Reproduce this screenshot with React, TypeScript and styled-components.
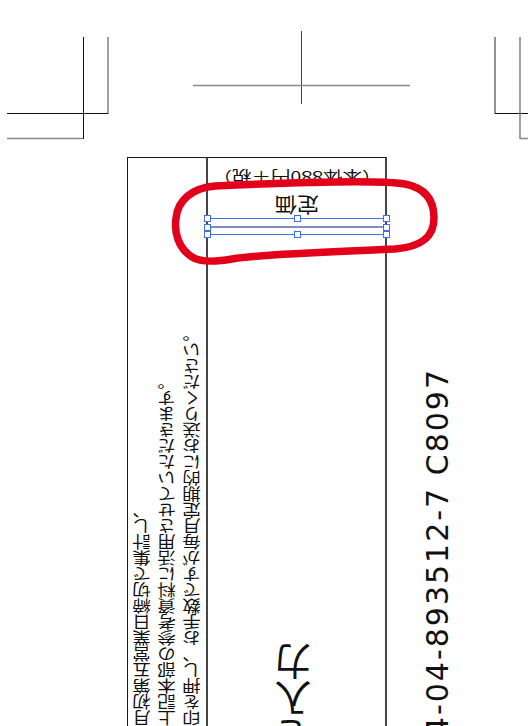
import React from "react";
import styled, { createGlobalStyle } from "styled-components";

const GlobalStyle = createGlobalStyle`
  html, body { margin: 0; padding: 0; background: #ffffff; }
  body { font-family: "Noto Sans CJK JP", "Noto Sans", sans-serif; color: #111; }
`;

const Page = styled.div`
  position: relative;
  width: 528px;
  height: 726px;
  overflow: hidden;
  background: #ffffff;
`;

const Marks = styled.svg`
  display: block;
  width: 528px;
  height: 157px;
`;

const Sheet = styled.div`
  display: flex;
  align-items: stretch;
  height: 569px;
  padding-left: 127px;
`;

const Flap = styled.div`
  box-sizing: border-box;
  width: 79px;
  flex-shrink: 0;
  border-left: 1px solid #1a1a1a;
  border-top: 1px solid #1a1a1a;
  padding-left: 7px;
  display: flex;
  flex-direction: column;
  align-items: flex-start;
`;

const Notice = styled.div`
  flex-shrink: 0;
  margin-top: 168px;
  writing-mode: vertical-rl;
  transform: rotate(180deg) scaleX(1.15);
  font-size: 16px;
  line-height: 21.7px;
  white-space: pre;
  color: #111;
`;

const Spine = styled.div`
  box-sizing: border-box;
  width: 181px;
  flex-shrink: 0;
  border-top: 1px solid #1a1a1a;
  border-left: 2px solid #454545;
  border-right: 2px solid #454545;
  display: flex;
  flex-direction: column;
  align-items: center;
`;

const Flipped = styled.div<{ $size: number; $top: number; $stretch: number }>`
  flex-shrink: 0;
  margin-top: ${(p) => p.$top}px;
  font-size: ${(p) => p.$size}px;
  line-height: ${(p) => p.$size}px;
  white-space: nowrap;
  transform: rotate(180deg) scaleX(${(p) => p.$stretch});
  color: #111;
`;

const Frame = styled.div`
  position: relative;
  box-sizing: border-box;
  align-self: stretch;
  flex-shrink: 0;
  margin: 3px -2px 0 -1px;
  height: 17px;
  border-top: 1px solid #3f6ff0;
  border-bottom: 1px solid #3f6ff0;
  display: flex;
  align-items: center;
`;

const MidRule = styled.div`
  flex: 1;
  height: 2px;
  background: #7f8fb6;
`;

const Handle = styled.span<{ $x: "l" | "c" | "r"; $y: "t" | "m" | "b" }>`
  position: absolute;
  box-sizing: border-box;
  width: 7px;
  height: 7px;
  background: #ffffff;
  border: 1px solid #3f6ff0;
  left: ${(p) => (p.$x === "l" ? "-3px" : p.$x === "c" ? "calc(50% - 3px)" : "calc(100% - 4px)")};
  top: ${(p) => (p.$y === "t" ? "-4px" : p.$y === "m" ? "calc(50% - 3px)" : "calc(100% - 3px)")};
`;

const Title = styled.div`
  flex-shrink: 0;
  margin: 408px 7px 0 0;
  writing-mode: vertical-rl;
  transform: rotate(180deg);
  font-size: 37px;
  line-height: 37px;
  white-space: nowrap;
  color: #111;
`;

const CodeColumn = styled.div`
  flex: 1;
  display: flex;
  flex-direction: column;
  align-items: flex-start;
  padding-left: 36px;
`;

const Isbn = styled.div`
  flex-shrink: 0;
  margin-top: 211px;
  writing-mode: vertical-rl;
  transform: rotate(180deg);
  font-family: "DejaVu Sans", sans-serif;
  font-size: 30px;
  line-height: 30px;
  letter-spacing: 2px;
  white-space: nowrap;
  color: #111;
`;

const Annotation = styled.svg`
  position: absolute;
  left: 0;
  top: 0;
  width: 528px;
  height: 726px;
  pointer-events: none;
`;

const CropMarks = () => (
  <Marks viewBox="0 0 528 157">
    <g fill="none">
      <line x1="83.5" y1="37" x2="83.5" y2="139" stroke="#111" strokeWidth="1" />
      <line x1="108" y1="37" x2="108" y2="114" stroke="#8a8a8a" strokeWidth="1.6" />
      <line x1="7" y1="113.5" x2="108" y2="113.5" stroke="#111" strokeWidth="1" />
      <line x1="7" y1="138.5" x2="83" y2="138.5" stroke="#8a8a8a" strokeWidth="1.6" />

      <line x1="301.5" y1="31" x2="301.5" y2="104" stroke="#444" strokeWidth="1" />
      <line x1="193" y1="85.5" x2="410" y2="85.5" stroke="#8a8a8a" strokeWidth="1.6" />

      <line x1="495" y1="37" x2="495" y2="114" stroke="#666" strokeWidth="1.4" />
      <line x1="495" y1="113.5" x2="528" y2="113.5" stroke="#111" strokeWidth="1" />
      <line x1="520" y1="37" x2="520" y2="139" stroke="#777" strokeWidth="1.4" />
      <line x1="520" y1="138.5" x2="528" y2="138.5" stroke="#8a8a8a" strokeWidth="1.6" />
    </g>
  </Marks>
);

const noticeText = [
  "各報告書は毎月初第五営業日締切で集計し、",
  "記入の数値は上記本部の参考資料に活用させていただきます。",
  "確認の上、店印を押し、お手数ですが毎月定期的にお送りください。",
].join("\n");

export default function App() {
  return (
    <Page>
      <GlobalStyle />
      <CropMarks />
      <Sheet>
        <Flap>
          <Notice>{noticeText}</Notice>
        </Flap>
        <Spine>
          <Flipped $size={15} $top={12} $stretch={1.3}>（本体880円＋税）</Flipped>
          <Flipped $size={20} $top={10} $stretch={1.1}>定価</Flipped>
          <Frame>
            <MidRule />
            <Handle $x="l" $y="t" />
            <Handle $x="c" $y="t" />
            <Handle $x="r" $y="t" />
            <Handle $x="l" $y="m" />
            <Handle $x="r" $y="m" />
            <Handle $x="l" $y="b" />
            <Handle $x="c" $y="b" />
            <Handle $x="r" $y="b" />
          </Frame>
          <Title>書名を入力</Title>
        </Spine>
        <CodeColumn>
          <Isbn>ISBN4-04-893512-7 C8097</Isbn>
        </CodeColumn>
      </Sheet>
      <Annotation viewBox="0 0 528 726">
        <path
          d="M 215 186 C 300 182, 380 180, 405 184 C 425 188, 434 200, 434 218 C 434 238, 420 247, 395 249 C 330 252, 260 254, 232 259 C 215 262, 200 262, 192 257 C 178 248, 174 232, 176 218 C 178 200, 192 188, 215 186 Z"
          fill="none"
          stroke="#e2001a"
          strokeWidth="7.5"
          strokeLinejoin="round"
        />
      </Annotation>
    </Page>
  );
}
